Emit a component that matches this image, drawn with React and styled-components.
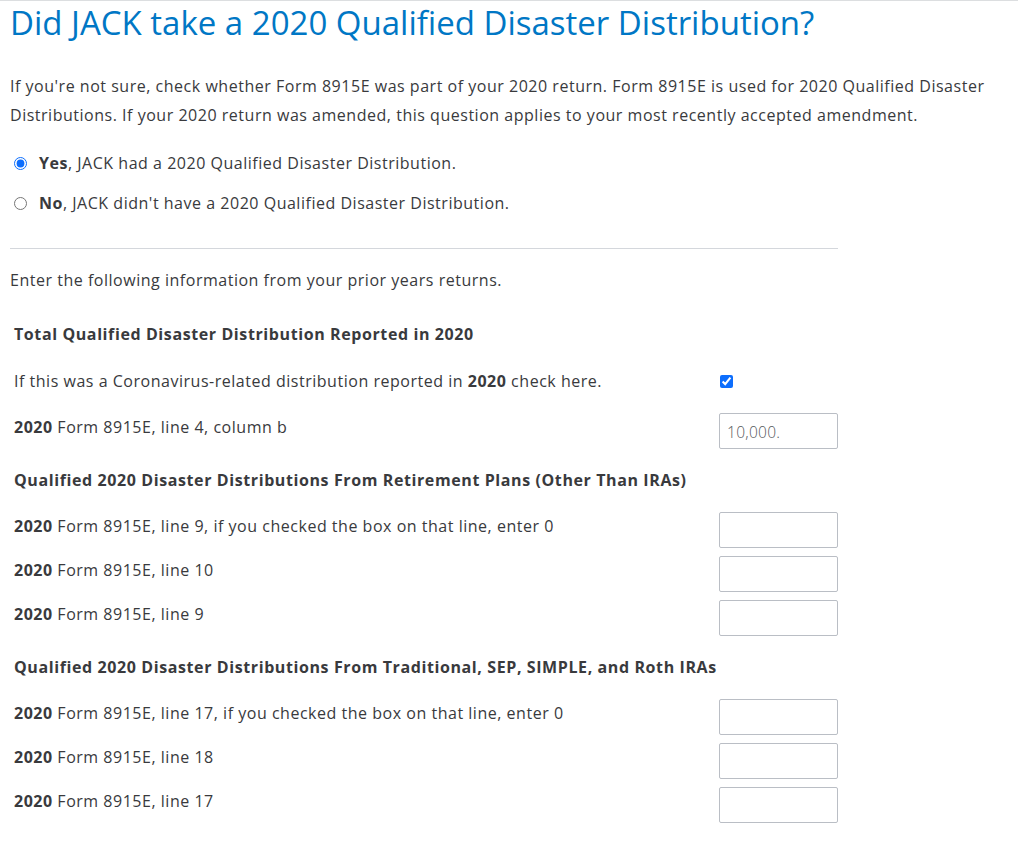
import React from 'react'
import styled, { createGlobalStyle } from 'styled-components'

const GlobalStyle = createGlobalStyle`
    html, body {
        margin: 0;
        padding: 0;
        background: #ffffff;
    }
    body {
        font-family: "Open Sans", "Noto Sans", sans-serif;
        color: #393a3d;
    }
`;

const Page = styled.div`
    border-top: 1px solid #dcdee0;
    padding: 0 0 20px 10px;
`;

const Content = styled.div`
    width: 828px;
`;

const Title = styled.h1`
    margin: 0;
    padding-top: 1px;
    font-size: 33px;
    font-weight: 400;
    line-height: 42px;
    color: #0077c5;
    white-space: nowrap;
`;

const Text = styled.div`
    font-size: 16px;
    letter-spacing: 0.52px;
    line-height: 24px;
    b { font-weight: 700; }
`;

const Intro = styled(Text)`
    margin-top: 28px;
    width: 1008px;
    line-height: 29px;
`;

const Choices = styled.div`
    display: flex;
    flex-direction: column;
    gap: 16px;
    margin-top: 21px;
`;

const Choice = styled(Text).attrs({ as: 'label' })`
    display: flex;
    align-items: center;
    gap: 12px;
    padding-left: 4px;
`;

const Radio = styled.input.attrs({ type: 'radio' })`
    margin: 0;
    width: 13px;
    height: 13px;
    accent-color: #0d6efd;
`;

const Divider = styled.hr`
    margin: 33px 0 0;
    border: 0;
    border-top: 1px solid #d4d7dc;
`;

const Lead = styled(Text)`
    margin-top: 19px;
`;

const Section = styled.section`
    margin-top: ${p => p.$first ? '30px' : '19px'};
    padding-left: 4px;
`;

const SectionTitle = styled(Text).attrs({ as: 'h3' })`
    margin: 0;
    font-weight: 700;
    letter-spacing: 0.6px;
`;

const Row = styled(Text)`
    display: flex;
    align-items: center;
    justify-content: space-between;
    min-height: ${p => p.$input ? 44 : 36}px;
    margin-top: ${p => p.$gap}px;
`;

const Control = styled.div`
    width: 119px;
    display: flex;
    align-items: center;
    align-self: ${p => p.$input ? 'flex-end' : 'center'};
`;

const Check = styled.input.attrs({ type: 'checkbox' })`
    margin: 0 0 0 1px;
    width: 13px;
    height: 13px;
    accent-color: #0d6efd;
`;

const Amount = styled.input`
    box-sizing: border-box;
    width: 119px;
    height: 36px;
    border: 1px solid #babec5;
    border-radius: 2px;
    padding: 2px 7px 0;
    font-family: "Open Sans", "Noto Sans", sans-serif;
    font-size: 15.5px;
    font-weight: 300;
    letter-spacing: 0.3px;
    color: #55575c;
`;

const retirement = [
    'line 9, if you checked the box on that line, enter 0',
    'line 10',
    'line 9',
];

const iras = [
    'line 17, if you checked the box on that line, enter 0',
    'line 18',
    'line 17',
];

const FormRow = ({ text, value, gap }) => (
    <Row $input $gap={gap}>
        <span><b>2020</b> Form 8915E, {text}</span>
        <Control $input>
            <Amount defaultValue={value} />
        </Control>
    </Row>
);

export default function App() {
    return (
        <Page>
            <GlobalStyle />
            <Content>
                <Title>Did JACK take a 2020 Qualified Disaster Distribution?</Title>
                <Intro>
                    If you're not sure, check whether Form 8915E was part of your 2020 return. Form 8915E is used for 2020 Qualified Disaster
                    <br />
                    Distributions. If your 2020 return was amended, this question applies to your most recently accepted amendment.
                </Intro>
                <Choices>
                    <Choice>
                        <Radio name="qdd" defaultChecked />
                        <span><b>Yes</b>, JACK had a 2020 Qualified Disaster Distribution.</span>
                    </Choice>
                    <Choice>
                        <Radio name="qdd" />
                        <span><b>No</b>, JACK didn't have a 2020 Qualified Disaster Distribution.</span>
                    </Choice>
                </Choices>
                <Divider />
                <Lead>Enter the following information from your prior years returns.</Lead>

                <Section $first>
                    <SectionTitle>Total Qualified Disaster Distribution Reported in 2020</SectionTitle>
                    <Row $gap={17}>
                        <span>If this was a Coronavirus-related distribution reported in <b>2020</b> check here.</span>
                        <Control>
                            <Check defaultChecked />
                        </Control>
                    </Row>
                    <FormRow text="line 4, column b" value="10,000." gap={6} />
                </Section>

                <Section>
                    <SectionTitle>Qualified 2020 Disaster Distributions From Retirement Plans (Other Than IRAs)</SectionTitle>
                    {retirement.map((t, i) => <FormRow key={t} text={t} gap={i ? 0 : 12} />)}
                </Section>

                <Section>
                    <SectionTitle>Qualified 2020 Disaster Distributions From Traditional, SEP, SIMPLE, and Roth IRAs</SectionTitle>
                    {iras.map((t, i) => <FormRow key={t} text={t} gap={i ? 0 : 12} />)}
                </Section>
            </Content>
        </Page>
    )
}
